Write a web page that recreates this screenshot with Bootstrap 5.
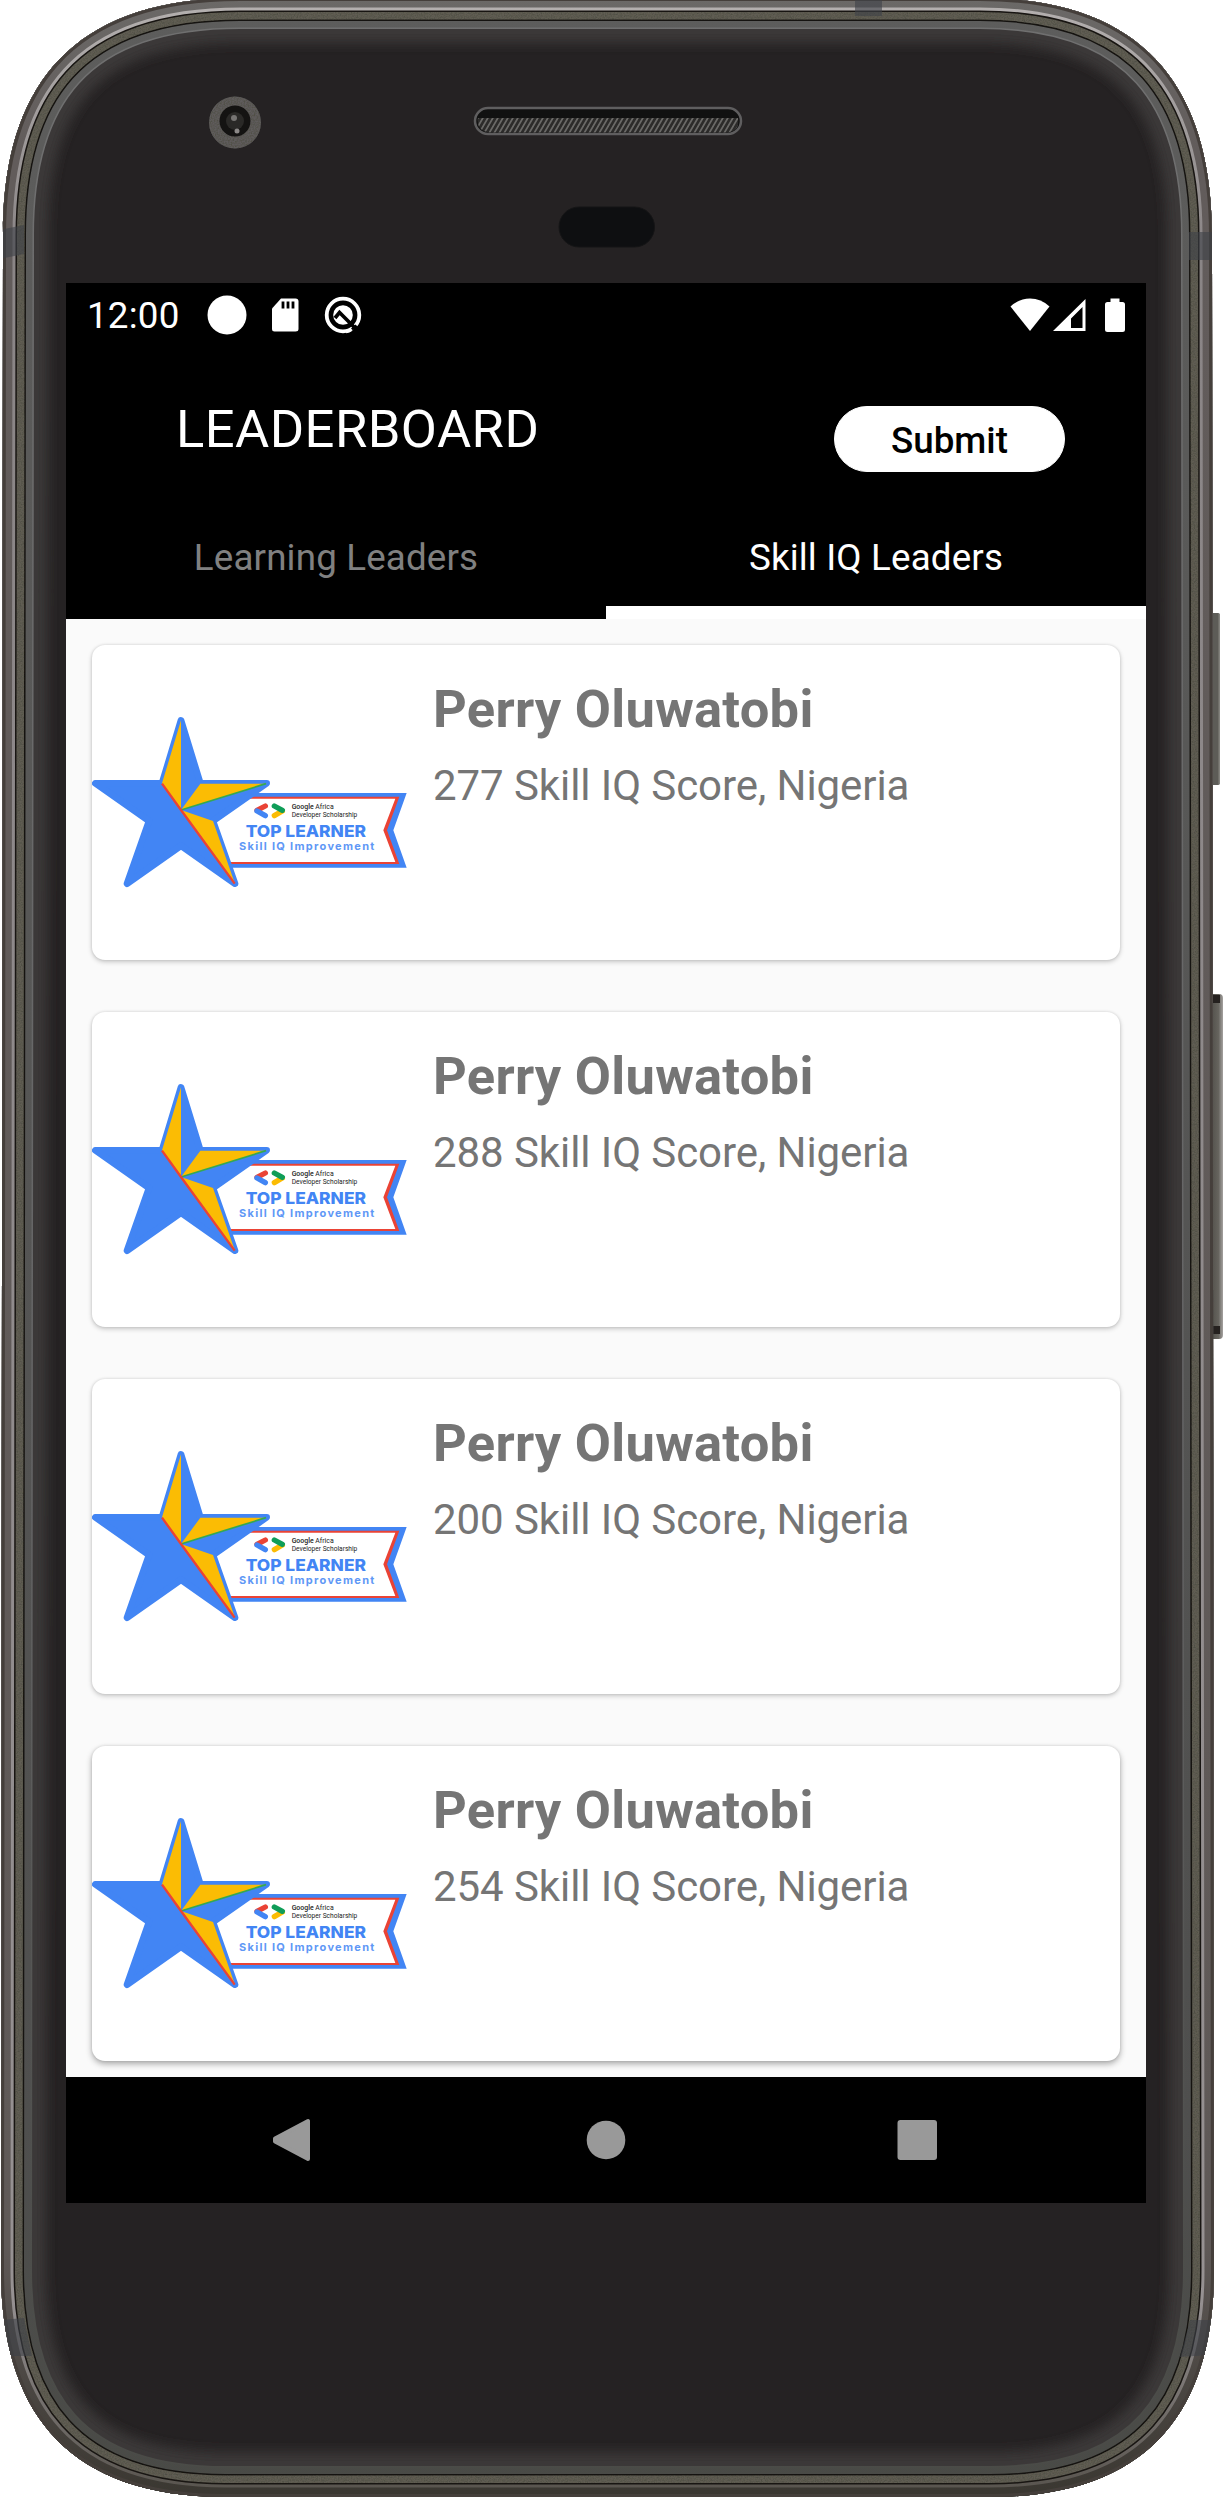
<!DOCTYPE html>
<html lang="en">
<head>
<meta charset="utf-8">
<meta name="viewport" content="width=device-width, initial-scale=1">
<title>Leaderboard</title>
<link href="https://cdn.jsdelivr.net/npm/bootstrap@5.3.0/dist/css/bootstrap.min.css" rel="stylesheet">
<style>
  body { background: #fff; font-family: Roboto, "Liberation Sans", sans-serif; }
  .phone { width: 1224px; height: 2498px; padding: 283px 78px 295px 66px; }
  .phone-frame { inset: 0; width: 1224px; height: 2498px; }
  .app-screen { width: 1080px; height: 1920px; background: #fafafa; }
  .status-bar { height: 63px; padding: 0 21px 0 21px; }
  .clock { font-size: 36.75px; line-height: 43px; letter-spacing: .2px; width: 120px; padding-top: 2px; }
  .toolbar { height: 173px; padding: 0 81px 0 110px; }
  .app-title { font-size: 52.5px; line-height: 62px; font-weight: 400; letter-spacing: .45px; margin-top: 52px; }
  .submit-btn { --bs-btn-bg: #fff; --bs-btn-color: #000; --bs-btn-border-color: #fff; --bs-btn-font-weight: 500;
    --bs-btn-font-size: 36.75px; --bs-btn-line-height: 43px; --bs-btn-border-radius: 33px; --bs-btn-padding-y: 0; --bs-btn-padding-x: 0;
    width: 231px; height: 66px; margin-top: 60px; padding-top: 2px; }
  .tab-strip { height: 100px; }
  .tab-strip .nav-link { --bs-nav-link-padding-y: 0; height: 100px; padding: 17px 0 0; font-size: 36.75px; line-height: 43px;
    letter-spacing: .15px; color: #808080; border-bottom: 13px solid #000; }
  .tab-strip .nav-link.active { color: #fff; border-bottom-color: #fff; }
  .board { height: 1458px; padding: 26px 26px 0; gap: 52px; }
  .leader { --bs-card-border-radius: 13px; --bs-card-border-width: 0; height: 315px; flex: none;
    box-shadow: 0 2px 5px rgba(0,0,0,.2), 0 0 3px rgba(0,0,0,.12); }
  .leader:last-child { box-shadow: 0 3px 6px rgba(0,0,0,.32), 0 0 3px rgba(0,0,0,.12); }
  .leader .card-body { padding: 33px 0 0 26px; color: #757575; }
  .leader .card-title { font-size: 52.5px; line-height: 62px; font-weight: 700; letter-spacing: .27px; margin-bottom: 21px; }
  .leader .card-text { font-size: 42px; line-height: 49px; letter-spacing: -.07px; }
  .nav-keys { height: 126px; }
</style>
</head>
<body>
<div class="phone position-relative overflow-hidden">
  <svg class="phone-frame position-absolute" viewBox="0 0 1224 2498" aria-hidden="true">
    <defs>
      <path id="shell" d="M3 235C3 92 66 -2 240 -2L980 -2C1148 -2 1212 92 1212 235L1214 2270C1214 2408 1152 2497 990 2497L225 2497C64 2497 1 2408 1 2270Z"/>
      <clipPath id="shellClip"><use href="#shell"/></clipPath>
      <filter id="soft" x="-5%" y="-5%" width="110%" height="110%"><feGaussianBlur stdDeviation="6"/></filter>
      <filter id="grain" x="0" y="0" width="100%" height="100%">
        <feTurbulence type="fractalNoise" baseFrequency=".7" numOctaves="2" result="n"/>
        <feColorMatrix in="n" type="matrix" values="0 0 0 0 .08  0 0 0 0 .08  0 0 0 0 .06  1.6 1.6 0 0 -1.3" result="g"/>
        <feComposite in="g" in2="SourceGraphic" operator="in" result="gg"/>
        <feMerge><feMergeNode in="SourceGraphic"/><feMergeNode in="gg"/></feMerge>
      </filter>
      <pattern id="mesh" width="5" height="6" patternUnits="userSpaceOnUse" patternTransform="skewX(-30)"><rect width="5" height="6" fill="#2c2b2a"/><rect width="2" height="6" fill="#6a6967"/></pattern>
      <linearGradient id="rim" x1="0" y1="0" x2="0" y2="1"><stop offset="0" stop-color="#6b6967"/><stop offset=".06" stop-color="#625c5b"/><stop offset=".9" stop-color="#5f5957"/><stop offset="1" stop-color="#3a3731"/></linearGradient>
      <linearGradient id="shine" x1="0" y1="0" x2="0" y2="1"><stop offset="0" stop-color="#b5b1b0"/><stop offset=".1" stop-color="#8a8586"/><stop offset=".92" stop-color="#969192"/><stop offset="1" stop-color="#56524c"/></linearGradient>
      <linearGradient id="bevel" x1="0" y1="0" x2="0" y2="1"><stop offset="0" stop-color="#5d5d5c"/><stop offset=".85" stop-color="#4f4f4e"/><stop offset="1" stop-color="#494a46"/></linearGradient>
      <linearGradient id="lip" x1="0" y1="0" x2="0" y2="1"><stop offset="0" stop-color="#707070"/><stop offset=".6" stop-color="#646465"/><stop offset=".9" stop-color="#4d4e4b"/><stop offset="1" stop-color="#4a4b47"/></linearGradient>
      <linearGradient id="key" x1="0" y1="0" x2="1" y2="0"><stop offset="0" stop-color="#4a4843"/><stop offset=".7" stop-color="#66645e"/><stop offset="1" stop-color="#a5a2a0"/></linearGradient>
    </defs>
    <rect x="1208" y="613" width="12" height="172" rx="2" fill="#5d5c57"/>
    <rect x="1218.500" y="614" width="1.500" height="170" fill="#83827d"/>
    <rect x="1208" y="994" width="15" height="345" rx="4" fill="url(#key)"/>
    <path d="M1212 999h8M1212 1330h8" stroke="#25211f" stroke-width="8"/>
    <g clip-path="url(#shellClip)" fill="none">
      <use href="#shell" fill="#252223"/>
      <use href="#shell" stroke="#3a3937" stroke-width="90" filter="url(#soft)"/>
      <use href="#shell" stroke="url(#lip)" stroke-width="62"/>
      <use href="#shell" stroke="url(#bevel)" stroke-width="59"/>
      <use href="#shell" stroke="#151310" stroke-width="46"/>
      <use href="#shell" stroke="#605d52" stroke-width="43" filter="url(#grain)"/>
      <use href="#shell" stroke="#181512" stroke-width="28"/>
      <use href="#shell" stroke="url(#shine)" stroke-width="25"/>
      <use href="#shell" stroke="url(#rim)" stroke-width="19"/>
      <use href="#shell" stroke="#453f3b" stroke-width="6"/>
      <g fill="#3d4147" opacity=".6">
        <path d="M0 230l24-5v29l-24 5zM1189 232h25v28h-25zM855 0h27v16h-27zM0 2320l24-2 8 38H0zM1190 2320h26l-7 35-29 2z"/>
      </g>
    </g>
    <circle cx="235" cy="122.500" r="26" fill="#5e5c5c" filter="url(#grain)"/>
    <circle cx="235" cy="121" r="15.500" fill="#141312"/><circle cx="235" cy="121" r="9" fill="#2a2927"/>
    <circle cx="234" cy="118" r="3" fill="#777573"/><circle cx="237" cy="131" r="2.500" fill="#8b8887"/>
    <rect x="475" y="108" width="266" height="26" rx="13" fill="#111" stroke="#5f5e5f" stroke-width="2.500"/>
    <path d="M478 118h260q2 14-12 14.500H490Q476 131 478 118Z" fill="url(#mesh)"/>
    <rect x="559" y="207" width="95.500" height="40" rx="20" fill="#0e0f11" stroke="#151516"/>
  </svg>

  <main class="app-screen position-relative d-flex flex-column overflow-hidden">
    <header class="bg-black text-white">
      <div class="status-bar d-flex align-items-center">
        <span class="clock">12:00</span>
        <svg width="40" height="40" viewBox="0 0 40 40"><circle cx="20" cy="20" r="19.500" fill="#fff"/></svg>
        <svg class="ms-4" width="28" height="34" viewBox="0 0 28 34"><path d="M10 .5h14.500q3 0 3 3V31q0 2.500-3 2.500h-21Q1 33.500 1 31V10.500Z" fill="#fff"/><path d="M12 3.500v7m5-7v7m5-7v7" stroke="#000" stroke-width="2.800"/></svg>
        <svg width="38" height="38" viewBox="0 0 38 38" style="margin-left:25px"><circle cx="19" cy="19" r="16.300" fill="none" stroke="#fff" stroke-width="3.800"/><circle cx="19" cy="19" r="9.800" fill="#fff"/><path d="m11 22 4.500-5.500L33 34" fill="none" stroke="#000" stroke-width="3.600"/><path d="m28 33.500 4.500-4" stroke="#000" stroke-width="3"/><path d="M22 35.500q3-.5 5-2" stroke="#fff" stroke-width="3.500" fill="none"/></svg>
        <svg class="ms-auto" width="115" height="34" viewBox="0 0 115 34"><path d="M.5 8.500Q9 .5 20 .5t19.500 8L20 33Z" fill="#fff"/><path fill-rule="evenodd" d="M43 33 75.500 1v32ZM72.500 9 61 20.500V30h11.500Z" fill="#fff"/><path d="M100.500.5h9V4h3q2.500 0 2.500 2.500V31.500q0 2.500-2.500 2.500h-15q-2.500 0-2.500-2.500V6.500Q95 4 97.500 4h3Z" fill="#fff"/></svg>
      </div>
      <div class="toolbar d-flex justify-content-between align-items-start">
        <h1 class="app-title mb-0">LEADERBOARD</h1>
        <button type="button" class="btn submit-btn d-flex align-items-center justify-content-center">Submit</button>
      </div>
      <nav class="tab-strip nav nav-justified">
        <a class="nav-link nav-item text-center" href="#">Learning Leaders</a>
        <a class="nav-link nav-item text-center active" href="#">Skill IQ Leaders</a>
      </nav>
    </header>

    <section class="board d-flex flex-column">
      <article class="card leader flex-row">
        <svg width="315" height="315" viewBox="36 -165 945 945" role="img" aria-label="Top learner badge">
          <symbol id="topLearner" viewBox="36 -165 945 945">
            <path d="M420 279H980L940 391 980 503H420Z" fill="#4285f4"/>
            <path d="M420 290H958L921 391 958 492H420Z" fill="#ea4335"/>
            <path d="M420 296H946L910 391 946 486H420Z" fill="#fff"/>
            <path d="M303 61 361 250H560L399 363 465 551 303 437 141 551 207 363 46 250H246Z" fill="#4285f4" stroke="#4285f4" stroke-width="20" stroke-linejoin="round"/>
            <path d="M303 61V330L246 250ZM303 330 361 251H560ZM303 330 399 363 465 551Z" fill="#fbbc04"/>
            <path d="M303 330 558 251" stroke="#34a853" stroke-width="5"/>
            <path d="M246 251 303 330 464 551" fill="none" stroke="#ea4335" stroke-width="7"/>
            <g fill="none" stroke-width="16" stroke-linecap="round">
              <path d="M531 331 556 318" stroke="#ea4335"/><path d="M531 333 556 347" stroke="#4285f4"/>
              <path d="M607 333 583 347" stroke="#fbbc04"/><path d="M583 318 607 331" stroke="#0f9d58"/>
            </g>
            <g font-family="Roboto, sans-serif" font-size="21" fill="#222">
              <text x="635" y="327" textLength="126" lengthAdjust="spacingAndGlyphs"><tspan font-weight="500">Google</tspan> Africa</text>
              <text x="635" y="351" textLength="197" lengthAdjust="spacingAndGlyphs">Developer Scholarship</text>
            </g>
            <g font-family="Inter, Roboto, sans-serif" fill="#4285f4">
              <text x="497" y="412" font-size="49" font-weight="800" textLength="361" lengthAdjust="spacingAndGlyphs">TOP LEARNER</text>
              <text x="477" y="451" font-size="33" font-weight="700" fill="#5f98f6" textLength="406">Skill IQ Improvement</text>
            </g>
          </symbol>
          <use href="#topLearner" x="36" y="-165" width="945" height="945"/>
        </svg>
        <div class="card-body"><h2 class="card-title">Perry Oluwatobi</h2><p class="card-text">277 Skill IQ Score, Nigeria</p></div>
      </article>
      <article class="card leader flex-row">
        <svg width="315" height="315" role="img" aria-label="Top learner badge"><use href="#topLearner" width="315" height="315"/></svg>
        <div class="card-body"><h2 class="card-title">Perry Oluwatobi</h2><p class="card-text">288 Skill IQ Score, Nigeria</p></div>
      </article>
      <article class="card leader flex-row">
        <svg width="315" height="315" role="img" aria-label="Top learner badge"><use href="#topLearner" width="315" height="315"/></svg>
        <div class="card-body"><h2 class="card-title">Perry Oluwatobi</h2><p class="card-text">200 Skill IQ Score, Nigeria</p></div>
      </article>
      <article class="card leader flex-row">
        <svg width="315" height="315" role="img" aria-label="Top learner badge"><use href="#topLearner" width="315" height="315"/></svg>
        <div class="card-body"><h2 class="card-title">Perry Oluwatobi</h2><p class="card-text">254 Skill IQ Score, Nigeria</p></div>
      </article>
    </section>

    <footer class="nav-keys bg-black">
      <svg class="d-block" width="1080" height="126" viewBox="0 0 1080 126" fill="#999" role="img" aria-label="Back, home, recent apps">
        <path d="M209 61.500 242 44V82L209 64.500Z" stroke="#999" stroke-width="4" stroke-linejoin="round"/>
        <circle cx="540" cy="63" r="19.300"/>
        <rect x="831.500" y="43" width="39.500" height="40" rx="3"/>
      </svg>
    </footer>
  </main>
</div>
<script src="https://cdn.jsdelivr.net/npm/bootstrap@5.3.0/dist/js/bootstrap.bundle.min.js"></script>
</body>
</html>
